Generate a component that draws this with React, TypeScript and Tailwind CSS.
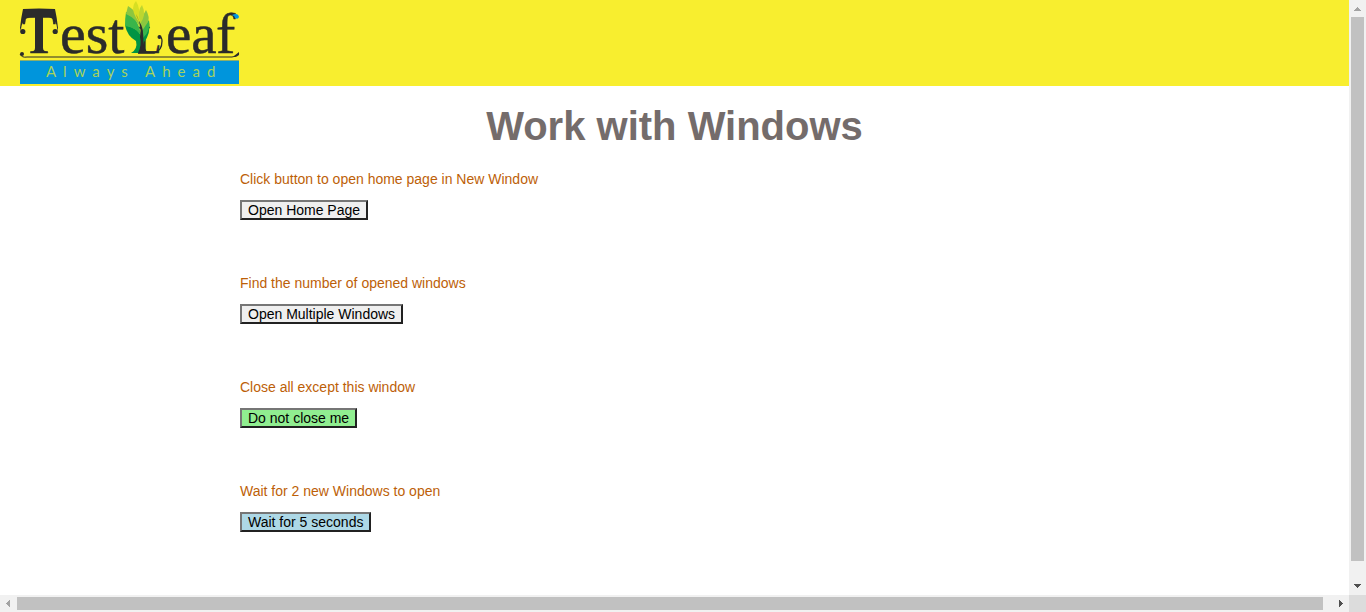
import React from "react";

type Item = { id: string; label: string; action: string; tone: string };

const items: Item[] = [
  { id: "home", label: "Click button to open home page in New Window", action: "Open Home Page", tone: "bg-[#efefef]" },
  { id: "multiple", label: "Find the number of opened windows", action: "Open Multiple Windows", tone: "bg-[#efefef]" },
  { id: "keep", label: "Close all except this window", action: "Do not close me", tone: "bg-[#90ee90]" },
  { id: "wait", label: "Wait for 2 new Windows to open", action: "Wait for 5 seconds", tone: "bg-[#add8e6]" },
];

function Logo() {
  return (
    <svg width="219" height="84" viewBox="0 0 219 84" role="img" aria-label="TestLeaf - Always Ahead" className="block overflow-visible">
      <g className="fill-[#2b2b2b] font-['Liberation_Serif',serif]" stroke="#2b2b2b" strokeWidth="0.5">
        <text x="2" y="53" fontSize="56">T</text>
        <text x="40" y="53" fontSize="58">est</text>
        <text x="117" y="53" fontSize="40">L</text>
        <text x="146" y="53" fontSize="57">ea</text>
        <text x="196" y="53" fontSize="58">f</text>
      </g>
      {/* heavy bar, hooks and stem of the initial */}
      <g fill="#2b2b2b">
        <path d="M3 9 Q19 8 35 9 Q37 18 38 28 L37 31 Q38 17 23 16 V48 Q23 52 29 53 H10 Q15 52 15 48 V16 Q1 17 1 31 L0 28 Q1 18 3 9 Z" />
        <circle cx="2.8" cy="31.5" r="2.6" />
        <circle cx="35.2" cy="31.5" r="2.6" />
        <circle cx="2" cy="54" r="2" />
        <path d="M0 54 Q2 58 7 57 H212 Q217 57 219 53" fill="none" stroke="#2b2b2b" strokeWidth="1" />
        <path d="M214 56 L219 52 V55 Q217 57 214 57Z" />
        <path d="M118 53 H134 Q142 51 142 41 Q142 37 139 36" fill="none" stroke="#2b2b2b" strokeWidth="1.3" />
        <circle cx="139.5" cy="37" r="2" />
      </g>
      {/* leaf */}
      <path d="M105 25 Q119 28 122 38 Q127 30 129 21 Q131 34 124 42 L121 53 H111 Q118 49 116 41 Q107 36 105 25Z" fill="#009444" />
      <path d="M106 12 Q118 17 121 35 Q115 27 105 26 Q105 18 106 12Z" fill="#39b54a" />
      <path d="M129 20 Q131 31 123 38 L121 30Z" fill="#39b54a" />
      <path d="M108 6 Q120 13 120 28 Q117 19 106 14Z" fill="#8dc63f" />
      <path d="M126 10 Q130 17 128 22 L122 31 L119 23Z" fill="#8dc63f" />
      <path d="M116 1 Q109 9 119 22 Q121 9 116 1Z" fill="#d7df23" />
      <path d="M122 5 Q117 10 120 24 Q127 15 122 5Z" fill="#bdd62f" />
      <path d="M116 14 C118 21 123 25 123 33 C124 40 122 46 128 53 H118 Q122 45 120 37 Q122 25 116 14Z" fill="#2b2b2b" />
      <path d="M212 15 Q218 12 219 17 Q218 20 215 18 Q215 16 212 15Z" fill="#0096e0" />
      <path d="M0 60.5H219" stroke="#8cae6c" />
      <rect y="61" width="219" height="23" fill="#0095dc" />
      <text x="26" y="77" fontSize="15" className="fill-[#a7d35b] font-['Lato',sans-serif] tracking-[7px]">Always Ahead</text>
    </svg>
  );
}

function Arrow({ d, muted }: { d: string; muted?: boolean }) {
  return (
    <svg width="17" height="17" viewBox="0 0 17 17" aria-hidden="true" shapeRendering="crispEdges" className="block shrink-0">
      <path d={d} className={muted ? "fill-[#a3a3a3]" : "fill-[#505050]"} />
    </svg>
  );
}

export default function App() {
  return (
    <div className="grid h-screen grid-cols-[minmax(0,1fr)_17px] grid-rows-[minmax(0,1fr)_17px] overflow-hidden bg-white font-['Liberation_Sans',Arial,sans-serif] text-sm">
      <div className="overflow-hidden">
        <header className="bg-[#f8ee2f] pb-0.5 pl-5">
          <a href="#home" className="block w-fit">
            <Logo />
          </a>
        </header>
        <main className="pt-5">
          <h1 className="text-center text-[40px] leading-[40px] font-bold text-[#746c6b]">Work with Windows</h1>
          <section className="flex flex-col gap-[55px] px-60 pt-[25px]">
            {items.map((item) => (
              <div key={item.id} className="flex flex-col items-start gap-[13px]">
                <label htmlFor={item.id} className="leading-4 text-[#bd5f08]">{item.label}</label>
                <button
                  id={item.id}
                  type="button"
                  className={`border-2 border-t-[#767676] border-r-[#212121] border-b-[#212121] border-l-[#767676] px-1.5 leading-4 text-black ${item.tone}`}
                >
                  {item.action}
                </button>
              </div>
            ))}
          </section>
        </main>
      </div>

      <div className="flex flex-col bg-[#f1f1f1]" aria-hidden="true">
        <Arrow muted d="M8 7h1v1h1v1h1v1h1v1H5v-1h1V9h1V8h1z" />
        <div className="min-h-0 grow px-0.5">
          <div className="h-[97%] bg-[#c1c1c1]" />
        </div>
        <Arrow d="M5 6h7v1h-1v1h-1v1H9v1H8V9H7V8H6V7H5z" />
      </div>

      <div className="flex bg-[#f1f1f1]" aria-hidden="true">
        <Arrow muted d="M10 5v7H9v-1H8v-1H7V9H6V8h1V7h1V6h1V5z" />
        <div className="min-w-0 grow py-0.5">
          <div className="h-full w-[99.3%] bg-[#c1c1c1]" />
        </div>
        <Arrow d="M7 5v7h1v-1h1v-1h1V9h1V8h-1V7H9V6H8V5z" />
      </div>
      <div className="bg-[#dcdcdc]" />
    </div>
  );
}
